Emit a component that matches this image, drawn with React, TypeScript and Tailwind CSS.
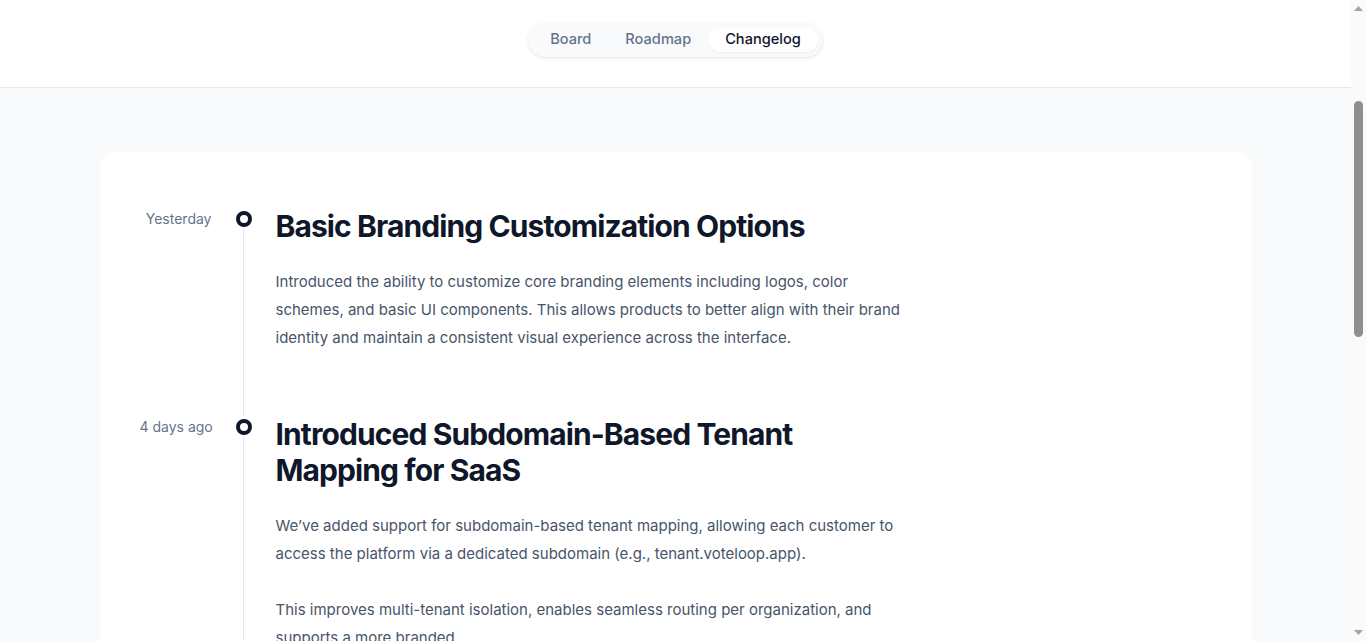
import React from "react";

type Entry = { date: string; title: string; paragraphs: React.ReactNode[] };

const entries: Entry[] = [
  {
    date: "Yesterday",
    title: "Basic Branding Customization Options",
    paragraphs: [
      "Introduced the ability to customize core branding elements including logos, color schemes, and basic UI components. This allows products to better align with their brand identity and maintain a consistent visual experience across the interface.",
    ],
  },
  {
    date: "4 days ago",
    title: "Introduced Subdomain-Based Tenant Mapping for SaaS",
    paragraphs: [
      "We’ve added support for subdomain-based tenant mapping, allowing each customer to access the platform via a dedicated subdomain (e.g., tenant.voteloop.app).",
      <>
        This improves multi-tenant isolation, enables seamless routing per organization, and supports a more branded
        <br />
        experience for every workspace on the platform.
      </>,
    ],
  },
  {
    date: "1 week ago",
    title: "Public Roadmap and Voting Improvements",
    paragraphs: [
      "The public roadmap now groups feedback by status and lets users vote directly from each column. Vote counts update instantly and duplicate votes are prevented automatically.",
    ],
  },
];

function Tab({ label, active }: { label: string; active?: boolean }) {
  return (
    <button
      className={
        active
          ? "h-[24px] px-[17px] rounded-full bg-white text-[14.6px] font-medium text-[#0f172a] shadow-[0_1px_2px_rgba(15,23,42,0.06)]"
          : "h-[24px] px-[17px] rounded-full text-[14.6px] font-medium text-[#64748b]"
      }
    >
      {label}
    </button>
  );
}

function Scrollbar() {
  return (
    <div className="w-[15px] shrink-0 h-full bg-[#fafafa] flex flex-col items-center">
      <svg width="15" height="15" viewBox="0 0 15 15" className="shrink-0">
        <polygon points="3,11 7.5,6 12,11" fill="#a3a3a3" />
      </svg>
      <div className="flex-1 w-full flex flex-col items-center pt-[86px]">
        <div className="w-[9px] h-[236px] rounded-full bg-[#8f8f8f]" />
      </div>
      <svg width="15" height="15" viewBox="0 0 15 15" className="shrink-0">
        <polygon points="3,4 12,4 7.5,9" fill="#a3a3a3" />
      </svg>
    </div>
  );
}

export default function App() {
  return (
    <div
      className="h-screen flex overflow-hidden bg-[#f8fafc] text-[#0f172a]"
      style={{ fontFamily: "Inter, 'Noto Sans', sans-serif" }}
    >
      <div className="flex-1 min-w-0 h-full overflow-hidden">
        <header className="h-[88px] bg-white border-b border-[#e5e7eb] flex items-start justify-center pt-[23px]">
          <nav className="flex items-center p-[5px] rounded-full bg-[#f8fafc] shadow-[0_1px_3px_rgba(15,23,42,0.12)]">
            <Tab label="Board" />
            <Tab label="Roadmap" />
            <Tab label="Changelog" active />
          </nav>
        </header>

        <main className="pt-16 pb-24">
          <div className="max-w-6xl mx-auto bg-white rounded-2xl px-10 pt-14 pb-16">
            {entries.map((e, i) => (
              <div key={i} className="flex">
                <div className="w-[72px] shrink-0 text-right text-sm leading-5 text-[#64748b] pt-px whitespace-nowrap">
                  {e.date}
                </div>
                <div className="w-[64px] shrink-0 flex flex-col items-center">
                  <div className="mt-[3px] w-4 h-4 rounded-full border-4 border-[#0f172a] bg-white shrink-0" />
                  <div className="w-px flex-1 bg-[#e2e8f0]" />
                </div>
                <div className={i === entries.length - 1 ? "flex-1 max-w-[628px]" : "flex-1 max-w-[628px] pb-16"}>
                  <h2 className="text-3xl leading-9 font-bold tracking-[-0.03em] text-[#0f172a]">
                    {e.title}
                  </h2>
                  <div className="mt-6 flex flex-col gap-7">
                    {e.paragraphs.map((p, j) => (
                      <p key={j} className="text-[15px] leading-7 text-[#475569]">
                        {p}
                      </p>
                    ))}
                  </div>
                </div>
              </div>
            ))}
          </div>
        </main>
      </div>
      <Scrollbar />
    </div>
  );
}
